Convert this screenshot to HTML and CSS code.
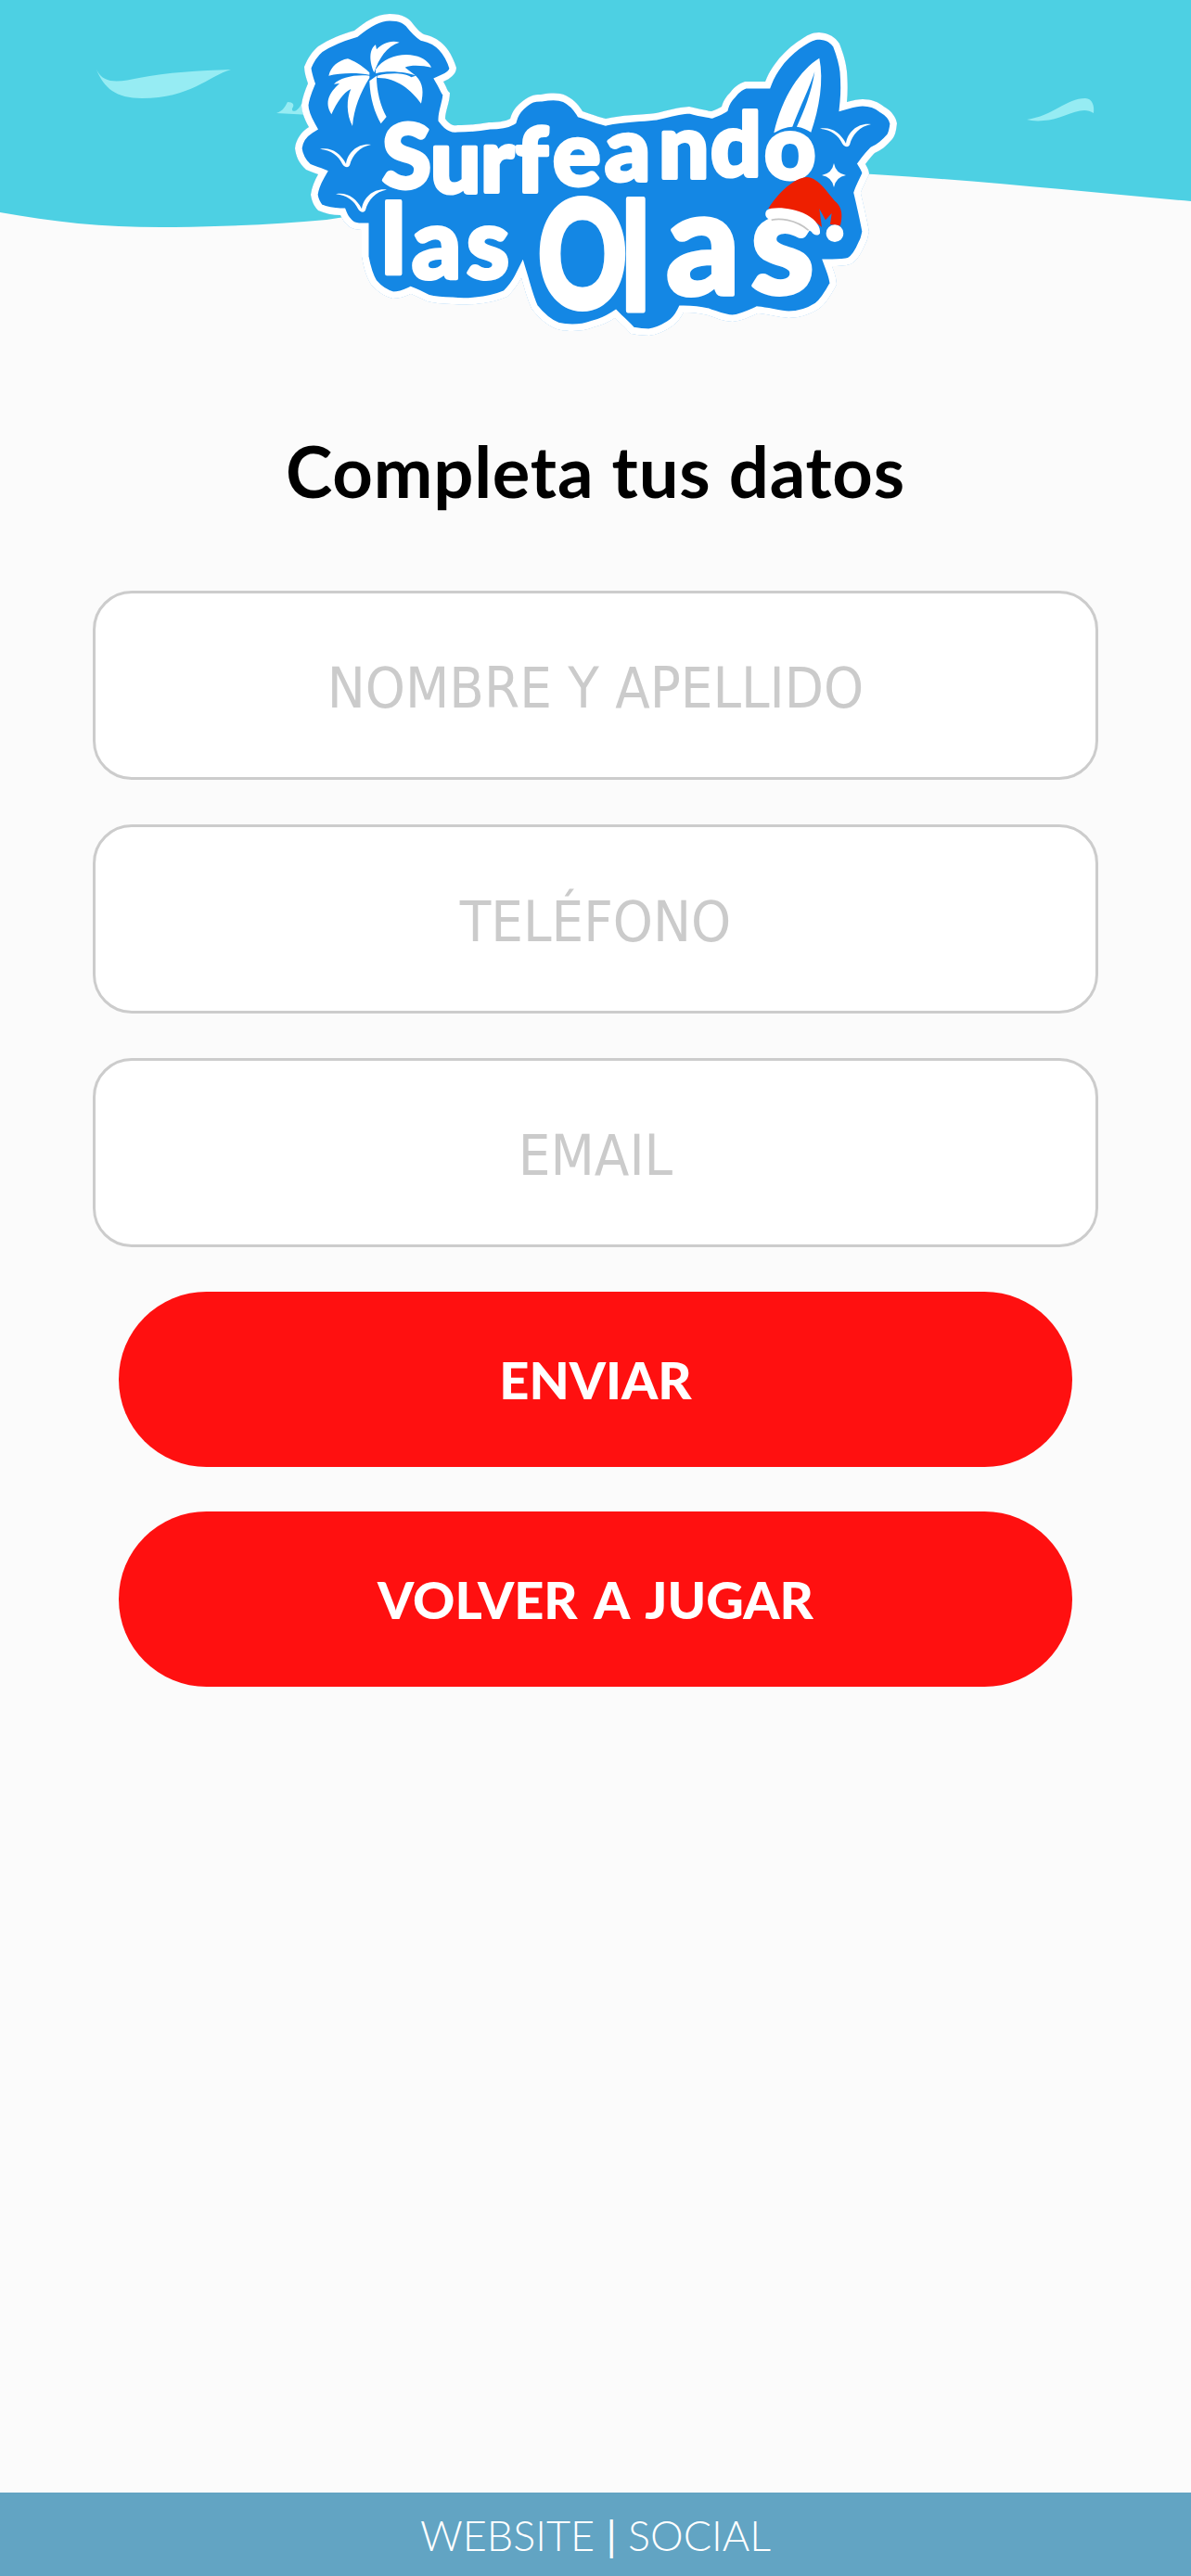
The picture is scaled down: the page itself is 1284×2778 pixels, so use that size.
FILE: index.html
```html
<!DOCTYPE html>
<html>
    <head>
        <title>Surfeando las Olas</title>
        <meta charset="UTF-8">
        <meta name="viewport" content="width=device-width, initial-scale=1.0">
        <link rel="stylesheet" href="styles.css">
    </head>
    <body>
        <header class="hero">
            <svg class="hero-art" width="1284" height="370" viewBox="0 0 1284 370">
                <defs>
                    <path id="blob" d="M420 15 C435 15 440 20 443 23 C450 32 452 34 457 37 C472 40 485 50 492 73 C492 80 485 85 478 88 C482 95 482 98 485 100 C485 110 480 120 480 128 C485 135 490 136 493 135 C505 135 515 134 527 132 C535 132 545 131 550 128 C553 118 558 114 560 112 C570 103 575 102 583 102 C595 100 603 100 610 103 C620 108 625 115 628 120 C640 124 645 126 653 128 C670 124 690 124 707 122 C720 119 730 116 743 115 C752 117 760 119 767 120 C772 118 775 117 778 115 C780 108 783 104 787 100 C793 92 798 90 803 88 C810 88 818 88 825 88 C830 75 835 70 840 63 C850 52 855 48 863 43 C870 38 875 35 883 35 C895 36 900 40 905 47 C910 60 912 68 913 77 C914 90 914 100 913 110 C920 108 925 107 930 107 C940 107 947 110 953 115 C962 120 966 127 967 133 C966 142 965 146 962 150 C955 158 950 162 943 165 C938 170 936 173 933 177 C936 182 937 185 937 188 C933 197 930 202 928 208 C932 225 935 238 937 250 C935 258 935 260 933 263 C928 275 923 282 917 285 C910 287 903 287 897 287 C900 295 902 300 902 307 C895 320 890 328 883 333 C872 340 860 343 850 343 C838 342 828 339 817 338 C808 342 800 346 790 347 C780 347 772 343 763 340 C755 338 746 337 737 337 C733 345 728 350 723 353 C715 358 708 361 700 362 C692 362 686 361 680 360 C673 352 668 348 663 343 C655 348 648 351 640 353 C632 356 625 357 617 357 C608 357 604 356 600 355 C588 350 580 342 573 333 C568 322 565 310 562 300 C558 308 552 315 547 320 C535 325 525 327 513 328 C505 329 495 329 487 328 C478 328 468 327 460 325 C454 322 448 319 443 317 C437 320 430 322 423 322 C415 320 406 314 400 307 C394 297 392 288 390 277 C390 268 390 258 390 248 C385 248 380 247 377 245 C372 241 369 237 367 232 C358 232 350 230 343 227 C338 222 336 216 335 210 C336 202 339 195 343 188 C338 186 334 185 330 183 C322 176 319 168 318 160 C319 150 325 142 333 137 C328 128 325 120 325 113 C326 105 329 97 332 90 C330 84 328 78 328 72 C332 62 337 55 343 50 C355 42 368 37 382 33 C393 24 406 15 420 15 Z"/>
                    <clipPath id="blob-clip"><use href="#blob"/></clipPath>
                    <path id="gull" d="M345 160.700 C357 158.300 367 165 373 176.700 C375 163.300 387 154 400 156 C388 158.300 380 166.700 377 178.300 C375 181.700 371 180 369 176.700 C365 168.300 357 161.700 345 160.700 Z"/>
                </defs>

                <path class="sky" d="M0 0 H1284 V217 C1170 207 1060 195 942 188 C780 178 520 212 352 237 C300 242 250 244 188 245 C120 246 60 240 0 229 Z"/>
                <path class="foam" d="M104 75 C112 92 130 88 150 84 C180 78 215 76 249 75 C225 82 205 106 153 106 C125 106 112 95 104 75 Z"/>
                <path class="foam" d="M1107 129 C1135 125 1150 106 1170 106 C1178 106 1180 115 1179 122 C1165 112 1145 130 1125 130 C1118 131 1112 130 1107 129 Z"/>
                <path class="foam" d="M298 122 C305 120 308 114 310 110 C316 110 318 113 315 117 C314 121 320 122 325 112 L335 124 Z"/>

                <use href="#blob" class="sticker" clip-path="url(#blob-clip)"/>

                <!-- palm -->
                <g class="logo-white" transform="translate(300 0) scale(.3333)">
                    <path d="M295 262 C297 320 312 365 332 400 L350 378 C330 340 318 295 318 245 Z"/>
                    <path d="M310 235 C290 190 298 155 315 145 L318 160 C335 140 365 128 392 137 C350 150 325 190 310 235 Z"/>
                    <path d="M315 225 C340 185 400 170 440 180 C470 185 490 205 495 218 C470 212 430 208 410 218 L445 245 C420 235 360 225 315 238 Z"/>
                    <path d="M320 245 C360 235 410 235 430 250 L445 245 C470 270 470 300 462 335 C430 290 380 250 320 252 Z"/>
                    <path d="M295 235 C270 210 240 195 225 190 C195 195 170 215 163 245 C200 235 260 235 295 242 Z"/>
                    <path d="M295 245 C250 240 200 250 180 272 L198 270 C165 300 148 330 172 370 C190 330 210 300 235 288 C220 320 220 370 240 408 C245 350 265 300 295 252 Z"/>
                </g>

                <!-- gulls and sparkle -->
                <use href="#gull" class="logo-white"/>
                <use href="#gull" class="logo-white" x="17" y="48.500"/>
                <use href="#gull" class="logo-white" x="539" y="-22"/>
                <path class="logo-white" d="M899 176 Q901 187 912 189 Q901 191 899 202 Q897 191 886 189 Q897 187 899 176 Z"/>

                <!-- board -->
                <g class="logo-white" transform="translate(600 0) scale(.3333)">
                    <path d="M850 188 C790 225 730 310 703 430 C720 420 745 410 763 410 C790 340 820 280 835 232 C825 300 800 360 777 410 C795 412 810 420 823 428 C850 350 865 260 850 188 Z"/>
                </g>

                <text class="logo-word logo-word-top" x="412 464 518 556 596 652 710 766 824" y="203 208 207 207 200 195 192 190 193">Surfeando</text>
                <text class="logo-word logo-word-las" x="411 444 503" y="295 300 300">las</text>
                <g transform="translate(580 0) scale(.74 1)">
                    <text class="logo-word logo-word-big" x="0 122" y="332 335">Ol</text>
                </g>
                <text class="logo-word logo-word-as" x="718 809" y="318 317">as</text>

                <!-- christmas hat -->
                <g transform="translate(600 0) scale(.3333)">
                    <path class="hat-red" d="M685 675 C720 620 770 575 810 573 C850 575 880 630 905 655 C925 675 925 700 918 730 L885 726 L890 690 L870 712 L850 675 L858 735 C820 700 750 675 685 675 Z"/>
                    <path class="logo-white" d="M680 680 C700 668 760 670 810 695 C840 712 855 735 852 755 C845 765 830 760 825 750 C790 725 740 710 690 710 C675 705 672 690 680 680 Z"/>
                    <path class="hat-crease" d="M695 712 C720 706 770 708 815 745"/>
                    <circle class="logo-white" cx="900" cy="755" r="28"/>
                </g>
            </svg>
        </header>

        <main class="form-page">
            <h1 class="form-title">Completa tus datos</h1>
            <form class="data-form">
                <input class="field" type="text" placeholder="NOMBRE Y APELLIDO">
                <input class="field" type="text" placeholder="TELÉFONO">
                <input class="field" type="text" placeholder="EMAIL">
                <button class="btn" type="button">ENVIAR</button>
                <button class="btn" type="button">VOLVER A JUGAR</button>
            </form>
        </main>

        <footer class="site-footer">WEBSITE <b class="sep">|</b> SOCIAL</footer>
    </body>
</html>
```

FILE: styles.css
```css
body{
    margin: 0;
    min-height: 2778px;
    background-color: #fbfbfb;
    display: flex;
    flex-direction: column;
    font-family: "Lato", "Noto Sans", sans-serif;
}
.hero-art{
    display: block;
}
.sky{
    fill: #4dd0e3;
}
.foam{
    fill: #96ecf3;
}
.sticker{
    fill: #1487e4;
    stroke: #ffffff;
    stroke-width: 15;
}
.logo-white{
    fill: #ffffff;
}
.logo-word{
    fill: #ffffff;
    stroke: #ffffff;
    stroke-linejoin: round;
    font-family: "Lato", sans-serif;
    font-weight: 900;
}
.logo-word-top{
    font-size: 96px;
    stroke-width: 4;
}
.logo-word-las{
    font-size: 104px;
    stroke-width: 4;
}
.logo-word-big{
    font-size: 160px;
    stroke-width: 6;
}
.logo-word-as{
    font-size: 156px;
    stroke-width: 4;
}
.hat-red{
    fill: #ee1f00;
}
.hat-crease{
    fill: none;
    stroke: #c4c4c4;
    stroke-width: 5;
}
.form-page{
    flex: 1;
    padding: 0 100px;
}
.form-title{
    margin: 92px 0 0;
    text-align: center;
    font-size: 76px;
    letter-spacing: 0.8px;
    line-height: 92px;
    font-weight: 700;
    color: #000000;
}
.data-form{
    display: flex;
    flex-direction: column;
    gap: 48px;
    margin-top: 83px;
}
.field{
    box-sizing: border-box;
    height: 204px;
    width: 100%;
    padding-top: 6px;
    border: solid #cccccc 3px;
    border-radius: 42px;
    background-color: #ffffff;
    text-align: center;
    font-family: "DejaVu Sans Condensed", "DejaVu Sans", sans-serif;
    font-size: 61px;
}
.field::placeholder{
    color: #cbcbcb;
    opacity: 1;
}
.btn{
    height: 189px;
    margin: 0 28px;
    border: none;
    border-radius: 95px;
    background-color: #ff1010;
    color: #ffffff;
    font-family: "Lato", sans-serif;
    font-size: 56px;
    word-spacing: 6px;
    font-weight: 900;
}
.site-footer{
    height: 90px;
    background-color: #62a4c3;
    color: #ffffff;
    text-align: center;
    font-size: 45px;
    line-height: 92px;
    font-weight: 300;
}
.sep{
    font-weight: 400;
}
```
